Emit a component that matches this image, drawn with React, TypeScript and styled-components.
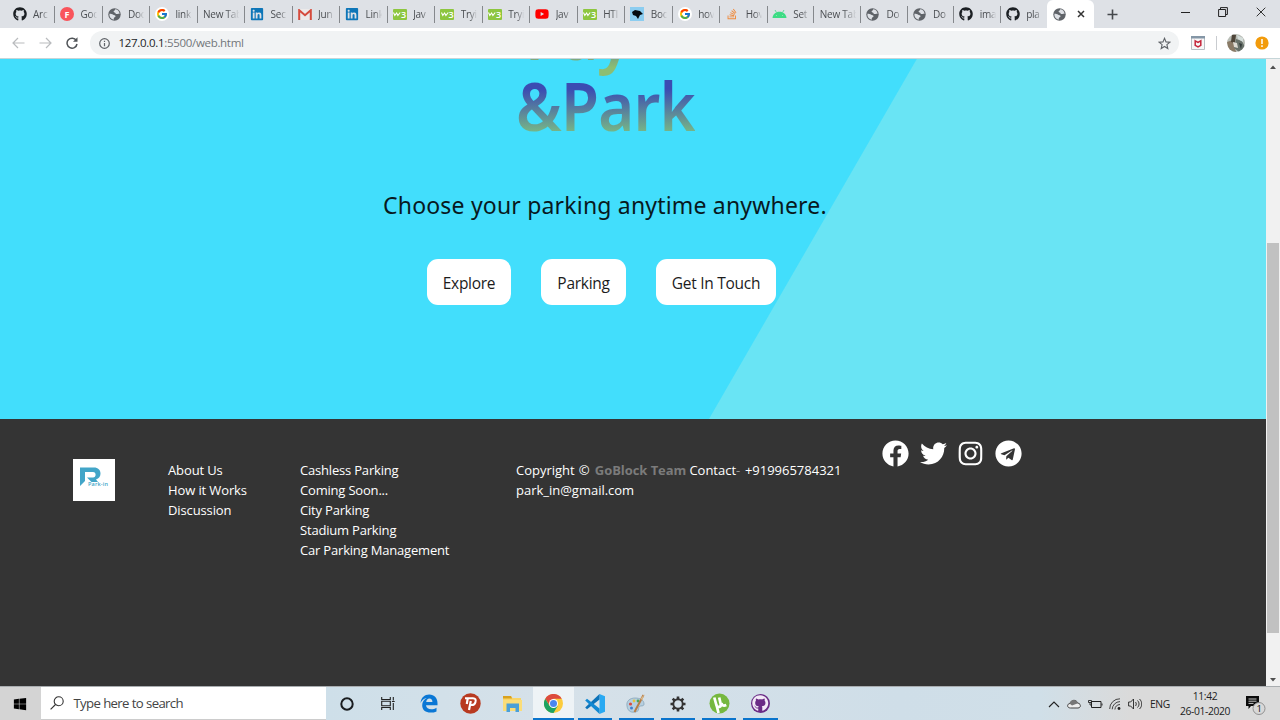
import React from 'react';
import styled, { createGlobalStyle } from 'styled-components';
import { FaGithub, FaLinkedin, FaYoutube, FaFacebook, FaTwitter, FaInstagram, FaTelegram, FaStackOverflow, FaWindows } from 'react-icons/fa';
import { FcGoogle } from 'react-icons/fc';

const ui = '"Open Sans", "Noto Sans", sans-serif';
const display = '"Noto Sans", "Open Sans", sans-serif';

const Global = createGlobalStyle`
  * { box-sizing: border-box; }
  body { margin: 0; overflow: hidden; font-family: ${ui}; }
  svg { display: block; flex: none; }
`;

const Screen = styled.div`
  width: 1280px; height: 720px; display: flex; flex-direction: column; overflow: hidden; background: #fff;
`;

/* ---------- tab strip ---------- */
const TabStrip = styled.div`
  height: 28px; flex: none; display: flex; background: #dee1e6; padding-left: 7px;
`;
const Tab = styled.div<{ $plain?: boolean; $narrow?: boolean }>`
  width: ${p => (p.$narrow ? 46.6 : 47.53)}px; height: 28px; flex: none; display: flex; align-items: center;
  padding-left: ${p => (p.$plain ? 6 : 5.5)}px; position: relative;
  &::after { content: ''; position: absolute; right: -0.5px; top: 6px; width: 1px; height: 17px; background: #85888c; }
  &:nth-child(22)::after { display: none; }
`;
const Favicon = styled.span`
  width: 14px; height: 16px; display: flex; align-items: center; justify-content: center; flex: none; margin-right: 6.5px;
`;
const TabTitle = styled.span<{ $wide?: boolean }>`
  width: ${p => (p.$wide ? 39 : 19)}px; overflow: hidden; white-space: nowrap; font-size: 10px; line-height: 16px;
  color: #4b4e52; letter-spacing: -0.25px;
  mask-image: linear-gradient(90deg, #000 ${p => (p.$wide ? 60 : 45)}%, transparent ${p => (p.$wide ? 94 : 85)}%);
`;
const ActiveTab = styled.div`
  width: 47px; height: 28px; background: #fff; border-radius: 6px 6px 0 0; display: flex; align-items: center;
  padding: 0 9px 0 6px; justify-content: space-between; flex: none;
`;
const NewTab = styled.div`
  width: 37px; display: flex; align-items: center; justify-content: center;
`;
const WindowControls = styled.div`
  margin-left: auto; display: flex; align-items: center; gap: 28px; padding: 0 14px 4px 0;
`;
const Disc = styled.span<{ $size: number; $bg: string }>`
  width: ${p => p.$size}px; height: ${p => p.$size}px; border-radius: 50%; background: ${p => p.$bg}; flex: none;
  display: flex; align-items: center; justify-content: center; color: #fff; font-weight: 700; font-size: 9px; line-height: 1;
`;
const W3Badge = styled.span`
  width: 14px; height: 11px; background: #8dc63f; border-radius: 1px; color: #fff; display: flex; flex: none;
  align-items: center; justify-content: center; font: 600 9px/11px "Open Sans", sans-serif;
`;

const Globe = () => (
  <svg width="13" height="13" viewBox="0 0 13 13">
    <circle cx="6.500" cy="6.500" r="6.200" fill="#5f6368" />
    <path d="M7.600 1.300c-1 .3-.5 1.200-1.400 1.500-1 .3-.6 1.500.3 1.600 1.200.1 1 1.700 2.200 1.700 1.200 0 1.500-.7 2.900-.2A5.300 5.300 0 0 0 7.600 1.300z" fill="#dee1e6" />
    <path d="M1.400 5.800c1.500.2 2.900 0 3.800.9.7.7 2.300.2 2.300 1.500 0 1.200-1.700.9-1.700 2.100v1.400A5.300 5.300 0 0 1 1.400 5.800z" fill="#dee1e6" />
  </svg>
);
const GoogleMark = () => <Disc $size={14} $bg="#fff"><FcGoogle size={12} /></Disc>;
const W3 = () => (
  <W3Badge>
    <svg width="8" height="7" viewBox="0 0 8 7"><path d="M.5 1.500l1.300 3L3.600 2l1.300 2.500L7.200 1.500" stroke="#fff" strokeWidth="1.100" fill="none" /></svg>3
  </W3Badge>
);
const GmailMark = () => (
  <svg width="14" height="11" viewBox="0 0 14 11"><path d="M1 0h12v11H1z" fill="#eceaea" /><path d="M1.200 11V1.200L7 6.200l5.800-5V11" fill="none" stroke="#d54b3d" strokeWidth="2" /></svg>
);
const BirdMark = () => (
  <svg width="14" height="14" viewBox="0 0 14 14"><rect width="14" height="14" fill="#8ccdf0" /><path d="M2 5l3-2 5 1 3 3-3 1-2 4-2-3-3-1z" fill="#050b10" /></svg>
);
const AndroidMark = () => (
  <svg width="15" height="10" viewBox="0 0 15 10"><path d="M.5 9C.9 5.300 3.600 2.800 7.500 2.800S14.100 5.300 14.500 9z" fill="#3ddc84" /><path d="M3 1l1.500 2.500M12 1l-1.500 2.500" stroke="#3ddc84" strokeWidth=".8" /><circle cx="4.400" cy="6.500" r=".5" fill="#a5e8c5" /><circle cx="10.600" cy="6.500" r=".5" fill="#a5e8c5" /></svg>
);

const tabs: { icon?: React.ReactNode; title: string }[] = [
  { icon: <FaGithub size={14} color="#1b1f23" />, title: 'Arc' },
  { icon: <Disc $size={14} $bg="#f9545b">F</Disc>, title: 'Goo' },
  { icon: <Globe />, title: 'Doc' },
  { icon: <GoogleMark />, title: 'link' },
  { title: 'New Tab' },
  { icon: <FaLinkedin size={14} color="#0e76b8" />, title: 'Sec' },
  { icon: <GmailMark />, title: 'Jun' },
  { icon: <FaLinkedin size={14} color="#0e76b8" />, title: 'Link' },
  { icon: <W3 />, title: 'Jav' },
  { icon: <W3 />, title: 'Tryi' },
  { icon: <W3 />, title: 'Tryi' },
  { icon: <FaYoutube size={14} color="#f00" />, title: 'Jav' },
  { icon: <W3 />, title: 'HTI' },
  { icon: <BirdMark />, title: 'Boo' },
  { icon: <GoogleMark />, title: 'hov' },
  { icon: <FaStackOverflow size={12} color="#f08a3c" />, title: 'Hov' },
  { icon: <AndroidMark />, title: 'Set' },
  { title: 'New Tab' },
  { icon: <Globe />, title: 'Do' },
  { icon: <Globe />, title: 'Do' },
  { icon: <FaGithub size={14} color="#1b1f23" />, title: 'ima' },
  { icon: <FaGithub size={14} color="#1b1f23" />, title: 'pla' },
];

/* ---------- toolbar ---------- */
const Toolbar = styled.div`
  height: 31px; flex: none; display: flex; align-items: center; background: #fff; border-bottom: 1px solid #c5d5d8;
  padding: 0 11px 0 12px;
`;
const NavButtons = styled.div`display: flex; gap: 14px; width: 78px; flex: none;`;
const Omnibox = styled.div`
  width: 1089px; height: 24px; border-radius: 12px; background: #f1f3f4; display: flex; align-items: center; flex: none;
  padding: 0 8px 0 9px; font-size: 11.5px; color: #72767a;
`;
const Url = styled.span`
  margin-left: 8.5px; letter-spacing: -0.31px; white-space: nowrap; line-height: 16px;
  b { font-weight: 400; color: #222427; }
`;
const StarSlot = styled.span`margin-left: auto;`;
const Extensions = styled.div`display: flex; align-items: center; margin: 0 10px 0 12px;`;
const Divider = styled.span`width: 1px; height: 14px; background: #c9ccd0; margin: 0 10px 0 11px;`;

const Avatar = () => (
  <svg width="18" height="18" viewBox="0 0 18 18">
    <clipPath id="av"><circle cx="9" cy="9" r="9" /></clipPath>
    <g clipPath="url(#av)">
      <rect width="18" height="18" fill="#b9bdb6" />
      <path d="M0 8l6-2 3 12H2z" fill="#8a7a66" /><path d="M5 0l4 1-1 8-4-1z" fill="#4e4539" />
      <path d="M9 5l6 2 3 6-6 5-5-4z" fill="#68716a" /><path d="M10 1l6 3v4l-5-3z" fill="#d5dedb" /><path d="M6 8l4 1 1 5-4-1z" fill="#dedbd3" /><path d="M12 9l3 1-1 5z" fill="#333c3a" />
    </g>
  </svg>
);

/* ---------- web page ---------- */
const Viewport = styled.div`flex: 1; min-height: 0; display: flex;`;
const Page = styled.main`width: 1266px; display: flex; flex-direction: column;`;
const Hero = styled.section`
  height: 360px; flex: none; overflow: hidden;
  background: linear-gradient(120deg, #42defc 793.5px, #69e4f4 794.5px);
`;
const HeroTitle = styled.h1`
  margin: -60px 0 0 516px; font: 600 67px/70px ${display}; display: flex; flex-direction: column; align-items: flex-start; gap: 1px;
`;
const TitleLine = styled.span<{ $indent?: number; $from: string; $to: string }>`
  margin-left: ${p => p.$indent ?? 0}px; padding-bottom: 16px; margin-bottom: -16px; letter-spacing: -0.8px;
  transform: scaleX(0.92); transform-origin: left;
  background: linear-gradient(${p => p.$from} 22%, ${p => p.$to} 80%); -webkit-background-clip: text; background-clip: text; color: transparent;
`;
const Tagline = styled.p`
  margin: 47px 0 0 383px; font: 400 23px/36px ${display}; letter-spacing: 0.19px; color: #08191e; white-space: nowrap;
`;
const Actions = styled.div`display: flex; gap: 30px; margin: 36px 0 0 427px;`;
const ActionButton = styled.button<{ $w: number }>`
  width: ${p => p.$w}px; height: 46px; border: 0; padding: 2px 0 0; border-radius: 11px; background: #fff; color: #1c1c1c;
  font: 400 15.5px/22px ${ui}; letter-spacing: -0.28px; white-space: nowrap;
`;
const Footer = styled.footer`
  flex: 1; background: #343434; color: #fff; display: flex; align-items: flex-start; font-size: 13px; line-height: 20px;
`;
const Logo = styled.div`
  width: 42px; height: 42px; background: #fff; margin: 40px 0 0 73px; flex: none;
`;
const LinkList = styled.ul<{ $w: number; $ml?: number; $spacing: number }>`
  list-style: none; padding: 0; margin: 41px 0 0 ${p => p.$ml ?? 0}px; width: ${p => p.$w}px; white-space: nowrap; flex: none; letter-spacing: ${p => p.$spacing}px;
`;
const Credit = styled.p`
  margin: 41px 0 0; width: 366px; flex: none; white-space: nowrap; letter-spacing: -0.01px; word-spacing: 0.8px;
  b { color: #7b7b7b; font-weight: 700; word-spacing: 0; letter-spacing: -0.06px; margin: 0 -1px 0 1px; }
  i { font-style: normal; color: #999; margin-right: 0.5px; }
`;
const Social = styled.div`display: flex; gap: 10.6px; margin-top: 21px; align-items: center;`;
const Scrollbar = styled.div`
  width: 14px; background: #f1f1f1; display: flex; flex-direction: column; align-items: center; justify-content: space-between; padding: 6px 0 4px;
`;
const Thumb = styled.div`width: 12px; height: 390px; background: #c1c1c1; margin-top: 128px;`;

/* ---------- taskbar ---------- */
const Taskbar = styled.div`
  height: 34px; flex: none; display: flex; border-top: 1px solid #a9adb0;
  background: linear-gradient(90deg, #d3d3d3 0, #cedfe9 326px, #d6e1e9 560px, #cfdee8 900px, #d0dfe8 1040px, #dadada 1130px);
`;
const StartButton = styled.div`width: 41px; display: flex; align-items: center; justify-content: center; background: #d4d4d4; padding-right: 2px;`;
const SearchBox = styled.div`
  width: 285px; background: #fff; border-bottom: 1px solid #ccc; display: flex; align-items: center; padding-left: 9px; gap: 9.5px;
  font-size: 13px; word-spacing: 0.3px; color: #444; line-height: 20px;
`;
const SearchLabel = styled.span`letter-spacing: -0.68px; font-size: 13.2px;`;
const AppSlot = styled.div<{ $on?: boolean; $open?: boolean }>`
  width: 41.4px; display: flex; align-items: center; justify-content: center; position: relative;
  background: ${p => (p.$on ? '#eef3f6' : 'transparent')};
  &::after { content: ''; position: absolute; bottom: 0; height: 2px; left: ${p => (p.$on ? 0 : 3.5)}px; right: ${p => (p.$on ? 0 : 3.5)}px; background: ${p => (p.$open || p.$on ? '#0a74cc' : 'transparent')}; }
`;
const Tray = styled.div`
  margin-left: auto; display: flex; align-items: center; font-size: 10.3px; color: #222; letter-spacing: -0.35px;
`;
const TrayIcons = styled.div`display: flex; align-items: center; gap: 6.8px; width: 102px;`;
const Lang = styled.span`width: 28px;`;
const Clock = styled.div`width: 54px; text-align: center; line-height: 15px; white-space: nowrap;`;
const Notice = styled.div`width: 48px; display: flex; justify-content: center; align-self: stretch; align-items: center;`;

const EdgeIcon = () => (
  <svg width="18" height="19" viewBox="0 0 18 19"><path d="M.5 9C1.100 3.500 4.600.6 9.200.6c5.300 0 8.300 3.700 8.300 8.600v2H6c.2 2.900 2.500 4 5.200 4 2 0 3.700-.5 5.300-1.500v3.700c-1.700.8-3.700 1.200-6 1.200C5.600 18.600 2.200 16 2.200 11.300c0-3.200 1.700-5.900 4.600-7.200C4.100 4.400 2 6.200.5 9zM6.200 8h6.200c0-2.200-1-3.500-3-3.500C7.600 4.500 6.500 5.800 6.200 8z" fill="#0a77d5" /></svg>
);
const PowerIcon = () => (
  <svg width="21" height="21" viewBox="0 0 21 21"><circle cx="10.500" cy="10.500" r="10.200" fill="#b83a20" /><path d="M5 5.300h8c2.600 0 3 1.600 2.500 3.600-.5 2.200-1.600 3.200-4 3.200H9.400" fill="none" stroke="#fff" strokeWidth="2" /><path d="M7.700 5.300L6.800 11M10.800 8L9 17" stroke="#fff" strokeWidth="2.200" fill="none" /></svg>
);
const FolderIcon = () => (
  <svg width="19" height="17" viewBox="0 0 19 17"><path d="M0 1h8l1.500 2H18v13H0z" fill="#f8d467" /><path d="M0 1h8l1 2.500H0z" fill="#d9a11d" /><path d="M0 5h19v11H0z" fill="#fbdd78" /><path d="M3.500 8.500h12.500V17h-3.500v-4H7v4H3.500z" fill="#4ba0d8" /></svg>
);
const ChromeIcon = () => (
  <svg width="19" height="19" viewBox="0 0 20 20"><circle cx="10" cy="10" r="10" fill="#fccc3d" /><path d="M1.300 5A10 10 0 0 1 18.700 5H10L6 12z" fill="#dd4b3e" /><path d="M1.300 5A10 10 0 0 0 10 20l4.300-7.500L6 12.500z" fill="#1da362" /><circle cx="10" cy="10" r="4.700" fill="#fff" /><circle cx="10" cy="10" r="3.700" fill="#4a86ee" /></svg>
);
const CodeIcon = () => (
  <svg width="20" height="20" viewBox="0 0 20 20"><path d="M14.500 0L20 2.300v15.400L14.500 20z" fill="#29a9f2" /><path d="M14.500 0v5.500L2 15.200.2 13.500z" fill="#0d73b9" /><path d="M14.500 20v-5.500L2 4.800.2 6.500z" fill="#1288d2" /></svg>
);
const PaintIcon = () => (
  <svg width="20" height="20" viewBox="0 0 20 20"><path d="M1 12C0 7 4 4 9 4s9 2 9 6c0 3-4 1-5 3s1 4-4 5-7.500-2-8-6z" fill="#b6cfe0" stroke="#7e9db2" strokeWidth=".7" /><circle cx="4.500" cy="10" r="1.600" fill="#d64b42" /><circle cx="8" cy="7" r="1.400" fill="#e8c33e" /><circle cx="12" cy="7" r="1.400" fill="#4aa55c" /><circle cx="5.500" cy="14" r="1.500" fill="#3f7fd0" /><path d="M17.500 1L8.500 18" stroke="#b77d45" strokeWidth="2" /><path d="M18.500 0l-2.200 6-2-1z" fill="#d9b98b" /></svg>
);
const GearIcon = () => (
  <svg width="16" height="16" viewBox="0 0 16 16"><g stroke="#333" strokeWidth="2.600"><path d="M8 .5v2.500M8 13v2.500M.5 8H3M13 8h2.500M2.700 2.700l1.800 1.800M11.500 11.500l1.800 1.800M13.300 2.700l-1.800 1.800M4.500 11.500l-1.800 1.800" /></g><circle cx="8" cy="8" r="4.700" fill="none" stroke="#333" strokeWidth="1.900" /></svg>
);
const TorrentIcon = () => (
  <svg width="21" height="21" viewBox="0 0 21 21"><circle cx="10.500" cy="10.500" r="10" fill="#76b83f" /><path d="M5.300 4.500l2.300 8.300c.7 2 4.600 1.200 4.200-1.200L10.200 4.500M12.500 10c.6 3 2.600 3 4.800 2M7.500 12l2 8" fill="none" stroke="#fff" strokeWidth="2.700" /></svg>
);
const DesktopGithub = () => (
  <Disc $size={19} $bg="#6b2c86"><FaGithub size={16.5} color="#f3eaf7" /></Disc>
);

export default function App() {
  return (
    <Screen>
      <Global />
      <TabStrip>
        {tabs.map((t, i) => (
          <Tab key={i} $plain={!t.icon} $narrow={i > 15}>
            {t.icon && <Favicon>{t.icon}</Favicon>}
            <TabTitle $wide={!t.icon}>{t.title}</TabTitle>
          </Tab>
        ))}
        <ActiveTab>
          <Globe />
          <svg width="8" height="8" viewBox="0 0 8 8"><path d="M1 1l6 6M7 1L1 7" stroke="#333" strokeWidth="1.500" /></svg>
        </ActiveTab>
        <NewTab><svg width="11" height="11" viewBox="0 0 11 11"><path d="M5.500.5v10M.5 5.500h10" stroke="#45484c" strokeWidth="1.600" /></svg></NewTab>
        <WindowControls>
          <svg width="9" height="9" viewBox="0 0 9 9"><path d="M0 4.500h9" stroke="#222" /></svg>
          <svg width="10" height="10" viewBox="0 0 10 10"><path d="M.6 2.500h7v7h-7zM2.500 2.500V.6h6.900v6.900H7.500" fill="none" stroke="#222" /></svg>
          <svg width="10" height="10" viewBox="0 0 10 10"><path d="M.7.7l8.600 8.600M9.300.7L.7 9.300" stroke="#333" /></svg>
        </WindowControls>
      </TabStrip>
      <Toolbar>
        <NavButtons>
          <svg width="13" height="12" viewBox="0 0 13 12"><path d="M12.500 6h-11M6 1L1 6l5 5" fill="none" stroke="#b9bbbe" strokeWidth="1.200" /></svg>
          <svg width="13" height="12" viewBox="0 0 13 12"><path d="M.5 6h11M7 1l5 5-5 5" fill="none" stroke="#b9bbbe" strokeWidth="1.200" /></svg>
          <svg width="12" height="12" viewBox="0 0 12 12"><path d="M10.300 3.500A5 5 0 1 0 11 7" fill="none" stroke="#4f5357" strokeWidth="1.500" /><path d="M11.500.3v4.500H7z" fill="#4f5357" /></svg>
        </NavButtons>
        <Omnibox>
          <svg width="11" height="11" viewBox="0 0 11 11"><circle cx="5.500" cy="5.500" r="4.800" fill="none" stroke="#5f6368" strokeWidth="1.200" /><path d="M5.500 5v3.200M5.500 2.700V4" stroke="#5f6368" strokeWidth="1.200" /></svg>
          <Url><b>127.0.0.1</b>:5500/web.html</Url>
          <StarSlot><svg width="13" height="13" viewBox="0 0 13 13"><path d="M6.500 1.300l1.500 3.600 3.900.3-3 2.500.9 3.800-3.300-2-3.300 2 .9-3.800-3-2.500 3.900-.3z" fill="none" stroke="#5f6368" strokeWidth="1.100" /></svg></StarSlot>
        </Omnibox>
        <Extensions>
          <svg width="14" height="14" viewBox="0 0 14 14"><path d="M.5.5h13v13H.5z" fill="#f7f8f8" stroke="#b7bec4" /><path d="M0 0h14v2.500H0z" fill="#8496a6" /><path d="M4.200 4.800L7 6.300l2.800-1.500v4.500L7 10.800 4.200 9.300z" fill="none" stroke="#c5263b" strokeWidth="1.500" /></svg>
          <Divider />
          <Avatar />
        </Extensions>
        <svg width="14" height="14" viewBox="0 0 14 14"><circle cx="7" cy="7" r="6.600" fill="#f29b0b" /><path d="M7 3v5M7 9.200v1.800" stroke="#fff" strokeWidth="1.500" /></svg>
      </Toolbar>

      <Viewport>
        <Page>
          <Hero>
            <HeroTitle>
              <TitleLine $indent={9} $from="#3648b4" $to="#8cbe73">Pay</TitleLine>
              <TitleLine $from="#3b4cb2" $to="#80c780">&amp;Park</TitleLine>
            </HeroTitle>
            <Tagline>Choose your parking anytime anywhere.</Tagline>
            <Actions>
              <ActionButton $w={84}>Explore</ActionButton>
              <ActionButton $w={85}>Parking</ActionButton>
              <ActionButton $w={120}>Get In Touch</ActionButton>
            </Actions>
          </Hero>
          <Footer>
            <Logo>
              <svg width="42" height="42" viewBox="0 0 42 42"><path d="M7 8.500h14c4 0 6.500 2.500 6.500 6 0 3-1.500 5-4.500 6l2 2.500h-6.500L14 18.500h6c3.500 0 3.500-5.500 0-5.500h-8v9l-5 5z" fill="#42a5c8" /><text x="15" y="27" fontSize="5.500" fontWeight="600" fontFamily="Open Sans, sans-serif" fill="#42a5c8" textLength="20">Park-in</text></svg>
            </Logo>
            <LinkList $ml={53} $w={132} $spacing={-0.12}><li>About Us</li><li>How it Works</li><li>Discussion</li></LinkList>
            <LinkList $w={216} $spacing={-0.19}><li>Cashless Parking</li><li>Coming Soon...</li><li>City Parking</li><li>Stadium Parking</li><li>Car Parking Management</li></LinkList>
            <Credit>Copyright © <b>GoBlock Team</b> Contact<i>-</i> +919965784321<br />park_in@gmail.com</Credit>
            <Social>
              <FaFacebook size={27} /><FaTwitter size={27} /><FaInstagram size={27} /><FaTelegram size={27} />
            </Social>
          </Footer>
        </Page>
        <Scrollbar>
          <svg width="6" height="4" viewBox="0 0 6 4"><path d="M0 4l3-3.500L6 4z" fill="#505050" /></svg>
          <Thumb />
          <svg width="6" height="4" viewBox="0 0 6 4"><path d="M0 0l3 3.500L6 0z" fill="#505050" /></svg>
        </Scrollbar>
      </Viewport>

      <Taskbar>
        <StartButton><FaWindows size={14} color="#000" /></StartButton>
        <SearchBox>
          <svg width="14" height="14" viewBox="0 0 14 14"><circle cx="8.700" cy="5.300" r="4.500" fill="none" stroke="#333" strokeWidth="1.100" /><path d="M5.500 8.500L.6 13.400" stroke="#333" strokeWidth="1.100" /></svg>
          <SearchLabel>Type here to search</SearchLabel>
        </SearchBox>
        <AppSlot><svg width="14" height="14" viewBox="0 0 14 14"><circle cx="7" cy="7" r="5.700" fill="none" stroke="#1a1d20" strokeWidth="2" /></svg></AppSlot>
        <AppSlot><svg width="15" height="13" viewBox="0 0 15 13"><path d="M.7 0v2.500h8.600V0M.7 13v-2.500h8.600V13M.7 4.200h8.600v4.600H.7zM12.300 0v3.500M12.300 6v7M10.900 4.500h2.800" fill="none" stroke="#222" strokeWidth="1.100" /></svg></AppSlot>
        <AppSlot><EdgeIcon /></AppSlot>
        <AppSlot><PowerIcon /></AppSlot>
        <AppSlot><FolderIcon /></AppSlot>
        <AppSlot $on><ChromeIcon /></AppSlot>
        <AppSlot $open><CodeIcon /></AppSlot>
        <AppSlot $open><PaintIcon /></AppSlot>
        <AppSlot $open><GearIcon /></AppSlot>
        <AppSlot $open><TorrentIcon /></AppSlot>
        <AppSlot $open><DesktopGithub /></AppSlot>
        <Tray>
          <TrayIcons>
            <svg width="12" height="8" viewBox="0 0 12 8"><path d="M1 7l5-5 5 5" fill="none" stroke="#222" strokeWidth="1.100" /></svg>
            <svg width="14" height="10" viewBox="0 0 14 10"><path d="M3.500 9C-.5 9 0 4.500 3 4.500 4 .5 9.500.2 10.500 4c3.500 0 4 5 .5 5z" fill="#eee" stroke="#444" /><path d="M2.500 4.500C4 0 9.500 0 11 4.200L5 6.500z" fill="#777" /></svg>
            <svg width="15" height="10" viewBox="0 0 15 10"><path d="M3.500 2.500h9.500v6H3.500zM14 4.500v2" fill="none" stroke="#222" /><path d="M.5 1.500h3v2h-3zM2 3.500V6h1.500" stroke="#222" fill="none" strokeWidth=".9" /></svg>
            <svg width="12" height="12" viewBox="0 0 12 12"><path d="M.7 11A10 10 0 0 1 11 .8M3.200 11.300A8 8 0 0 1 11 3.600M5.900 11.500A5.500 5.500 0 0 1 11 6.500" fill="none" stroke="#444" /><circle cx="10" cy="10.500" r="1.400" fill="#222" /></svg>
            <svg width="14" height="12" viewBox="0 0 14 12"><path d="M.6 4h2L5.500 1v10L2.600 8h-2zM7.500 4c1 1.200 1 2.800 0 4M9.500 2.500c2 2 2 5 0 7M11.500 1c3 3 3 7 0 10" fill="none" stroke="#222" strokeWidth=".9" /></svg>
          </TrayIcons>
          <Lang>ENG</Lang>
          <Clock>11:42<br />26-01-2020</Clock>
          <Notice>
            <svg width="20" height="22" viewBox="0 0 20 22"><path d="M0 3h13v10H5l-2.500 3v-3H0z" fill="#0b0b0b" /><path d="M2.500 6h8M2.500 8.200h8M2.500 10.400h5" stroke="#ddd" strokeWidth=".9" /><circle cx="13" cy="15.500" r="6" fill="#d8d8d8" stroke="#888" strokeWidth=".9" /><text x="13" y="19" fontSize="9.500" textAnchor="middle" fill="#111" fontFamily="Open Sans, sans-serif">1</text></svg>
          </Notice>
        </Tray>
      </Taskbar>
    </Screen>
  );
}
